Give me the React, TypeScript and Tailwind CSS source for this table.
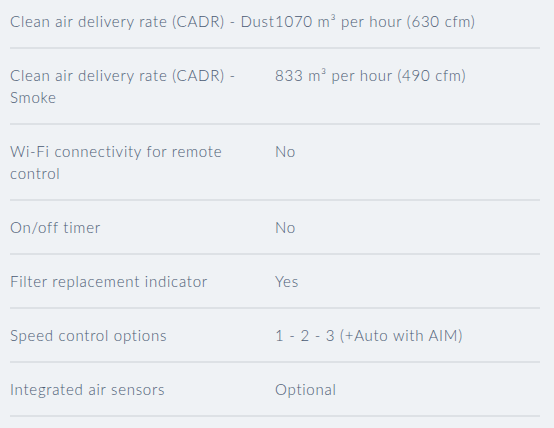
const specs: [string, string][] = [
  ['Clean air delivery rate (CADR) - Dust', '1070 m³ per hour (630 cfm)'],
  ['Clean air delivery rate (CADR) - Smoke', '833 m³ per hour (490 cfm)'],
  ['Wi-Fi connectivity for remote control', 'No'],
  ['On/off timer', 'No'],
  ['Filter replacement indicator', 'Yes'],
  ['Speed control options', '1 - 2 - 3 (+Auto with AIM)'],
  ['Integrated air sensors', 'Optional'],
];

export default function App() {
  return (
    <div className="w-[554px] h-[428px] overflow-hidden bg-[#eff2f5] font-['Lato',sans-serif] font-light text-[15px] leading-[22px] tracking-[0.75px] text-[#4a5a73]">
      <div className="-mt-[5px] pl-[10px] pr-[14px]">
        {specs.map(([label, value]) => (
          <div key={label} className="flex py-[15px] border-b-2 border-[#dde1e5]">
            <div className="w-[265px] shrink-0 pr-6">
              {label === 'Clean air delivery rate (CADR) - Dust' ? <span className="whitespace-nowrap">{label}</span> : label}
            </div>
            <div className="flex-1">{value}</div>
          </div>
        ))}
      </div>
    </div>
  );
}
